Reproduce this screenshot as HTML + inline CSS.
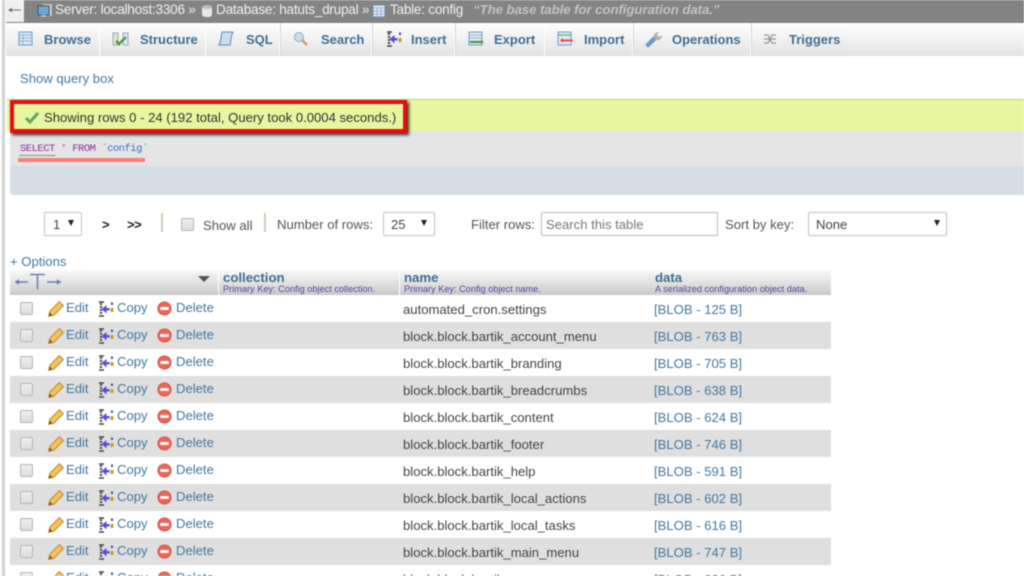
<!DOCTYPE html>
<html><head><meta charset="utf-8"><style>
html,body{margin:0;padding:0;width:1024px;height:576px;overflow:hidden;background:#fff}
#p{position:relative;width:1024px;height:576px;overflow:hidden;font-family:"Liberation Sans",sans-serif;font-size:13.1px;color:#444;filter:blur(.45px)}
.a{position:absolute;white-space:nowrap}
.tab{position:absolute;top:23px;height:33px;background:linear-gradient(#fff,#e2e2e2);border-right:1px solid #fff;box-shadow:1px 0 0 #d4d4d4}
.tl{position:absolute;top:32px;font-weight:bold;font-size:13px;color:#3f6f94;white-space:nowrap}
.l{color:#43789f}
.r{position:absolute;left:10px;width:821px;height:27px}
.g{background:#dfdfdf}
.r>*{position:absolute;white-space:nowrap}
.cb{left:10px;top:7px;width:11px;height:11px;border:1px solid #b5b5b5;border-radius:2px;background:linear-gradient(#eee,#ddd)}
.e{left:56px;top:5px;color:#43789f}.c{left:107px;top:5px;color:#43789f}.d{left:166px;top:5px;color:#43789f}
.n{left:393px;top:7px;color:#444}.b{left:644px;top:7px;color:#43789f}
.i1{left:37px;top:5px}.i2{left:88px;top:6px}.i3{left:147px;top:6px}
.sel{position:absolute;top:212px;height:24px;box-sizing:border-box;border:1px solid #c4c4c4;border-radius:2px;background:#fff}
.hd{position:absolute;top:270px;height:25px;background:linear-gradient(#fafafa,#c9c9c9)}
.ht{position:absolute;left:4px;top:0;font-weight:bold;font-size:13.2px;color:#3f6f94;white-space:nowrap}
.hs{position:absolute;left:4px;top:14px;font-size:9.2px;color:#5a45a8;white-space:nowrap}
.cr{font-size:13.6px;color:#f0f0f0;letter-spacing:-.25px;top:2px}
.car{width:0;height:0;border:3.5px solid transparent;border-top:6px solid #222;border-bottom:0}
</style></head><body><div id="p">
<svg width="0" height="0" style="position:absolute"><defs>
<symbol id="pen" viewBox="0 0 16 16"><path d="M1.500 14.500l1-4.500L11 1.500l3.500 3.500L6 13.500z" fill="#f3c35c" stroke="#c98e2c" stroke-width="1"/><path d="M1.500 14.500l1-3.500 2.500 2.500z" fill="#7a5a30"/></symbol>
<symbol id="cp" viewBox="0 0 16 16"><path d="M1 1h5M1 15h5" stroke="#444" stroke-width="1.600" fill="none"/><path d="M3 2v12" stroke="#555" stroke-width="2.400" stroke-dasharray="2 1"/><path d="M3.500 8l5-4v3h3v2.500h-3v3z" fill="#5a50d8"/><rect x="12.500" y="7" width="3" height="4" fill="#c9a020"/><rect x="13" y="1.500" width="2" height="2.500" fill="#4a48c8"/></symbol>
<symbol id="del" viewBox="0 0 16 16"><circle cx="8" cy="8" r="7" fill="#e8685c" stroke="#d9503f"/><rect x="3.500" y="6.500" width="9" height="3" fill="#fff"/></symbol>
</defs></svg>

<div class="a" style="left:0;top:0;width:6px;height:576px;background:#fff"></div>
<div class="a" style="left:2px;top:0;width:3px;height:576px;background:#d2d2d2"></div>
<div class="a" style="left:6px;top:0;width:1018px;height:23px;background:#848484"></div>
<div class="a" style="left:6px;top:0;width:18px;height:22px;background:#efefef"></div>
<svg class="a" style="left:8px;top:6px" width="13" height="8" viewBox="0 0 13 8"><path d="M1 4h12" stroke="#777"/><path d="M0 4l4-2.500v5z" fill="#777"/></svg>
<svg class="a" style="left:37px;top:3px" width="16" height="16" viewBox="0 0 16 16"><rect x="6" y="1" width="9" height="12" fill="#ccc" stroke="#999"/><rect x="1" y="3" width="11" height="9" fill="#6aa8d8" stroke="#456"/><rect x="4" y="12" width="5" height="2" fill="#bbb"/></svg>
<div class="a cr" style="left:55px">Server: localhost:3306 »</div>
<svg class="a" style="left:201px;top:4px" width="12" height="14" viewBox="0 0 12 14"><rect x="1" y="2" width="10" height="11" rx="3" fill="#e8e8e8"/><ellipse cx="6" cy="3" rx="5" ry="2" fill="#bbb"/></svg>
<div class="a cr" style="left:216px">Database: hatuts_drupal »</div>
<svg class="a" style="left:372px;top:4px" width="15" height="15" viewBox="0 0 15 15"><rect x="1" y="1" width="12" height="12" fill="#dde8f4" stroke="#5f8ab8"/><path d="M1 4h12M5 4v9M9 4v9M1 7h12M1 10h12" stroke="#8fa8c8" stroke-width=".8"/></svg>
<div class="a cr" style="left:390px">Table: config</div>
<div class="a" style="left:473px;top:2px;font-size:13.3px;font-weight:bold;font-style:italic;color:#c2c2c2;letter-spacing:-.1px">“The base table for configuration data.”</div>

<div class="a" style="left:6px;top:23px;width:1018px;height:33px;background:linear-gradient(#fff,#e4e4e4)"></div>
<div class="tab" style="left:6px;width:93px"></div>
<div class="tab" style="left:100px;width:105px"></div>
<div class="tab" style="left:206px;width:73px"></div>
<div class="tab" style="left:281px;width:90px"></div>
<div class="tab" style="left:373px;width:81px"></div>
<div class="tab" style="left:456px;width:88px"></div>
<div class="tab" style="left:545px;width:87px"></div>
<div class="tab" style="left:634px;width:116px"></div>
<div class="tab" style="left:752px;width:96px"></div>
<div class="a" style="left:848px;top:23px;width:176px;height:33px;background:linear-gradient(#fff,#e4e4e4)"></div>

<svg class="a" style="left:18px;top:31px" width="16" height="16" viewBox="0 0 16 16"><rect x="1" y="1" width="13" height="13" fill="#dbe8f6" stroke="#6f9ccc"/><path d="M1 4h13M1 7h13M1 10h13M5 4v10" stroke="#9ab8d8"/></svg>
<div class="tl" style="left:44px">Browse</div>
<svg class="a" style="left:112px;top:31px" width="18" height="16" viewBox="0 0 18 16"><rect x="1" y="2" width="5" height="12" fill="#dbe8c8" stroke="#9ab"/><rect x="11" y="2" width="5" height="12" fill="#dde8f4" stroke="#9ab"/><path d="M4 10l3 3 7-7" stroke="#4e9a34" stroke-width="2.400" fill="none"/></svg>
<div class="tl" style="left:140px">Structure</div>
<svg class="a" style="left:218px;top:30px" width="17" height="18" viewBox="0 0 17 18"><path d="M4 2h11c-2 3-2 9-3 13H1c2-3 2-9 3-13z" fill="#c8dcf2" stroke="#5f8ab8"/></svg>
<div class="tl" style="left:246px">SQL</div>
<svg class="a" style="left:293px;top:31px" width="16" height="16" viewBox="0 0 16 16"><circle cx="6" cy="6" r="4.500" fill="#c8dcf2" stroke="#9ab"/><path d="M9 9l5 5" stroke="#c8a060" stroke-width="2.400"/></svg>
<div class="tl" style="left:321px">Search</div>
<svg class="a" style="left:386px;top:31px" width="16" height="16"><use href="#cp"/></svg>
<div class="tl" style="left:411px">Insert</div>
<svg class="a" style="left:468px;top:31px" width="17" height="16" viewBox="0 0 17 16"><rect x="1" y="1" width="13" height="13" fill="#dde8f4" stroke="#6f9ccc"/><path d="M1 4h13M1 7h13" stroke="#9ab8d8"/><path d="M2 11h12" stroke="#4e9a34" stroke-width="2.200"/><path d="M13 9l3 2-3 2z" fill="#4e9a34"/></svg>
<div class="tl" style="left:494px">Export</div>
<svg class="a" style="left:557px;top:31px" width="17" height="16" viewBox="0 0 17 16"><rect x="1" y="1" width="13" height="13" fill="#dde8f4" stroke="#6f9ccc"/><path d="M1 4h13" stroke="#5aa65a"/><path d="M5 9.500h11" stroke="#e85050" stroke-width="2"/><path d="M6 7l-3 2.500 3 2.500z" fill="#e85050"/></svg>
<div class="tl" style="left:584px">Import</div>
<svg class="a" style="left:645px;top:31px" width="18" height="17" viewBox="0 0 18 17"><path d="M3 14L10 7" stroke="#6c9ccc" stroke-width="4.500" stroke-linecap="round"/><path d="M9 7c-1-3 1-6 5-6l-2 3 2 2 3-2c0 4-3 6-6 5z" fill="#b0b0b0"/></svg>
<div class="tl" style="left:672px">Operations</div>
<svg class="a" style="left:763px;top:33px" width="15" height="12" viewBox="0 0 15 12"><path d="M1 2h4l4 8h4M1 10h4l4-8h4M1 6h12" stroke="#999" stroke-width="1.300" fill="none"/></svg>
<div class="tl" style="left:789px">Triggers</div>

<div class="a l" style="left:20px;top:71px">Show query box</div>

<div class="a" style="left:7px;top:99px;width:1017px;height:32px;background:#e8f6a0;border-top:1px solid #b6d77a;box-sizing:border-box"></div>
<div class="a" style="left:10px;top:100px;width:397px;height:33px;box-sizing:border-box;border:4px solid #ee0b0b;box-shadow:2px 2px 3px rgba(0,0,0,.8)"></div>
<svg class="a" style="left:24px;top:110px" width="16" height="14" viewBox="0 0 16 14"><path d="M2 8l4 4 8-9" stroke="#5fa668" stroke-width="3" fill="none"/></svg>
<div class="a" style="left:44px;top:110px;color:#333">Showing rows 0 - 24 (192 total, Query took 0.0004 seconds.)</div>

<div class="a" style="left:10px;top:131px;width:1014px;height:35px;background:#e5e5e5;z-index:-1"></div>
<div class="a" style="left:10px;top:166px;width:1014px;height:29px;background:#d5dce3;border-bottom-left-radius:4px"></div>
<div class="a" style="left:20px;top:143px;font:10.500px 'Liberation Mono',monospace;letter-spacing:-.5px;line-height:12px;color:#444"><span style="color:#8a2fa8;border-bottom:1px dotted #333">SELECT</span> <span style="color:#e84ce8">*</span> <span style="color:#8a2fa8">FROM</span> <span style="color:#3a6fd0">`config`</span></div>
<div class="a" style="left:18px;top:158px;width:127px;height:4px;background:#f97d7d"></div>

<div class="sel" style="left:44px;width:38px"></div>
<div class="a" style="left:53px;top:217px;color:#444">1</div>
<div class="a car" style="left:68px;top:220px"></div>
<div class="a" style="left:102px;top:217px;font-weight:bold;color:#222;font-size:13px">&gt;</div>
<div class="a" style="left:127px;top:217px;font-weight:bold;color:#222;font-size:13px;letter-spacing:-.5px">&gt;&gt;</div>
<div class="a" style="left:161px;top:213px;width:2px;height:19px;background:#d8c8b8"></div>
<div class="a" style="left:181px;top:218px;width:11px;height:11px;border:1px solid #b5b5b5;border-radius:2px;background:linear-gradient(#eee,#ddd)"></div>
<div class="a" style="left:203px;top:218px;color:#555">Show all</div>
<div class="a" style="left:264px;top:213px;width:2px;height:19px;background:#d8c8b8"></div>
<div class="a" style="left:277px;top:217px;color:#555">Number of rows:</div>
<div class="sel" style="left:383px;width:52px"></div>
<div class="a" style="left:391px;top:217px;color:#444">25</div>
<div class="a car" style="left:421px;top:220px"></div>
<div class="a" style="left:471px;top:217px;color:#555">Filter rows:</div>
<div class="sel" style="left:541px;width:177px;border-color:#bbb"></div>
<div class="a" style="left:546px;top:217px;color:#777">Search this table</div>
<div class="a" style="left:725px;top:217px;color:#555">Sort by key:</div>
<div class="sel" style="left:808px;width:139px"></div>
<div class="a" style="left:816px;top:217px;color:#444">None</div>
<div class="a car" style="left:934px;top:220px"></div>

<div class="a l" style="left:10px;top:254px">+ Options</div>

<div class="hd" style="left:10px;width:208px"></div>
<svg class="a" style="left:14px;top:272px" width="48" height="20" viewBox="0 0 48 20"><path d="M1 10h13M16 2.500h15M23.500 2.500v15M33 10h14" stroke="#6d80b8" stroke-width="1.500" fill="none"/><path d="M1 10l4-3v6zM47 10l-4-3v6z" fill="#6d80b8"/></svg>
<div class="a" style="left:198px;top:276px;width:0;height:0;border:6px solid transparent;border-top:6px solid #555;border-bottom:0"></div>
<div class="hd" style="left:219px;width:180px"><div class="ht">collection</div><div class="hs">Primary Key: Config object collection.</div></div>
<div class="hd" style="left:400px;width:252px"><div class="ht" style="left:4px">name</div><div class="hs">Primary Key: Config object name.</div></div>
<div class="hd" style="left:652px;width:179px"><div class="ht" style="left:3px">data</div><div class="hs" style="left:3px">A serialized configuration object data.</div></div>

<div class="r" style="top:295px"><div class="cb"></div><svg class="i1" width="18" height="18"><use href="#pen"/></svg><span class="e">Edit</span><svg class="i2" width="16" height="16"><use href="#cp"/></svg><span class="c">Copy</span><svg class="i3" width="15" height="15"><use href="#del"/></svg><span class="d">Delete</span><span class="n">automated_cron.settings</span><span class="b">[BLOB - 125 B]</span></div>
<div class="r g" style="top:322px"><div class="cb"></div><svg class="i1" width="18" height="18"><use href="#pen"/></svg><span class="e">Edit</span><svg class="i2" width="16" height="16"><use href="#cp"/></svg><span class="c">Copy</span><svg class="i3" width="15" height="15"><use href="#del"/></svg><span class="d">Delete</span><span class="n">block.block.bartik_account_menu</span><span class="b">[BLOB - 763 B]</span></div>
<div class="r" style="top:349px"><div class="cb"></div><svg class="i1" width="18" height="18"><use href="#pen"/></svg><span class="e">Edit</span><svg class="i2" width="16" height="16"><use href="#cp"/></svg><span class="c">Copy</span><svg class="i3" width="15" height="15"><use href="#del"/></svg><span class="d">Delete</span><span class="n">block.block.bartik_branding</span><span class="b">[BLOB - 705 B]</span></div>
<div class="r g" style="top:376px"><div class="cb"></div><svg class="i1" width="18" height="18"><use href="#pen"/></svg><span class="e">Edit</span><svg class="i2" width="16" height="16"><use href="#cp"/></svg><span class="c">Copy</span><svg class="i3" width="15" height="15"><use href="#del"/></svg><span class="d">Delete</span><span class="n">block.block.bartik_breadcrumbs</span><span class="b">[BLOB - 638 B]</span></div>
<div class="r" style="top:403px"><div class="cb"></div><svg class="i1" width="18" height="18"><use href="#pen"/></svg><span class="e">Edit</span><svg class="i2" width="16" height="16"><use href="#cp"/></svg><span class="c">Copy</span><svg class="i3" width="15" height="15"><use href="#del"/></svg><span class="d">Delete</span><span class="n">block.block.bartik_content</span><span class="b">[BLOB - 624 B]</span></div>
<div class="r g" style="top:430px"><div class="cb"></div><svg class="i1" width="18" height="18"><use href="#pen"/></svg><span class="e">Edit</span><svg class="i2" width="16" height="16"><use href="#cp"/></svg><span class="c">Copy</span><svg class="i3" width="15" height="15"><use href="#del"/></svg><span class="d">Delete</span><span class="n">block.block.bartik_footer</span><span class="b">[BLOB - 746 B]</span></div>
<div class="r" style="top:457px"><div class="cb"></div><svg class="i1" width="18" height="18"><use href="#pen"/></svg><span class="e">Edit</span><svg class="i2" width="16" height="16"><use href="#cp"/></svg><span class="c">Copy</span><svg class="i3" width="15" height="15"><use href="#del"/></svg><span class="d">Delete</span><span class="n">block.block.bartik_help</span><span class="b">[BLOB - 591 B]</span></div>
<div class="r g" style="top:484px"><div class="cb"></div><svg class="i1" width="18" height="18"><use href="#pen"/></svg><span class="e">Edit</span><svg class="i2" width="16" height="16"><use href="#cp"/></svg><span class="c">Copy</span><svg class="i3" width="15" height="15"><use href="#del"/></svg><span class="d">Delete</span><span class="n">block.block.bartik_local_actions</span><span class="b">[BLOB - 602 B]</span></div>
<div class="r" style="top:511px"><div class="cb"></div><svg class="i1" width="18" height="18"><use href="#pen"/></svg><span class="e">Edit</span><svg class="i2" width="16" height="16"><use href="#cp"/></svg><span class="c">Copy</span><svg class="i3" width="15" height="15"><use href="#del"/></svg><span class="d">Delete</span><span class="n">block.block.bartik_local_tasks</span><span class="b">[BLOB - 616 B]</span></div>
<div class="r g" style="top:538px"><div class="cb"></div><svg class="i1" width="18" height="18"><use href="#pen"/></svg><span class="e">Edit</span><svg class="i2" width="16" height="16"><use href="#cp"/></svg><span class="c">Copy</span><svg class="i3" width="15" height="15"><use href="#del"/></svg><span class="d">Delete</span><span class="n">block.block.bartik_main_menu</span><span class="b">[BLOB - 747 B]</span></div>
<div class="r" style="top:565px"><div class="cb"></div><svg class="i1" width="18" height="18"><use href="#pen"/></svg><span class="e">Edit</span><svg class="i2" width="16" height="16"><use href="#cp"/></svg><span class="c">Copy</span><svg class="i3" width="15" height="15"><use href="#del"/></svg><span class="d">Delete</span><span class="n">block.block.bartik</span><span class="b">[BLOB - 636 B]</span></div>
</div></body></html>
